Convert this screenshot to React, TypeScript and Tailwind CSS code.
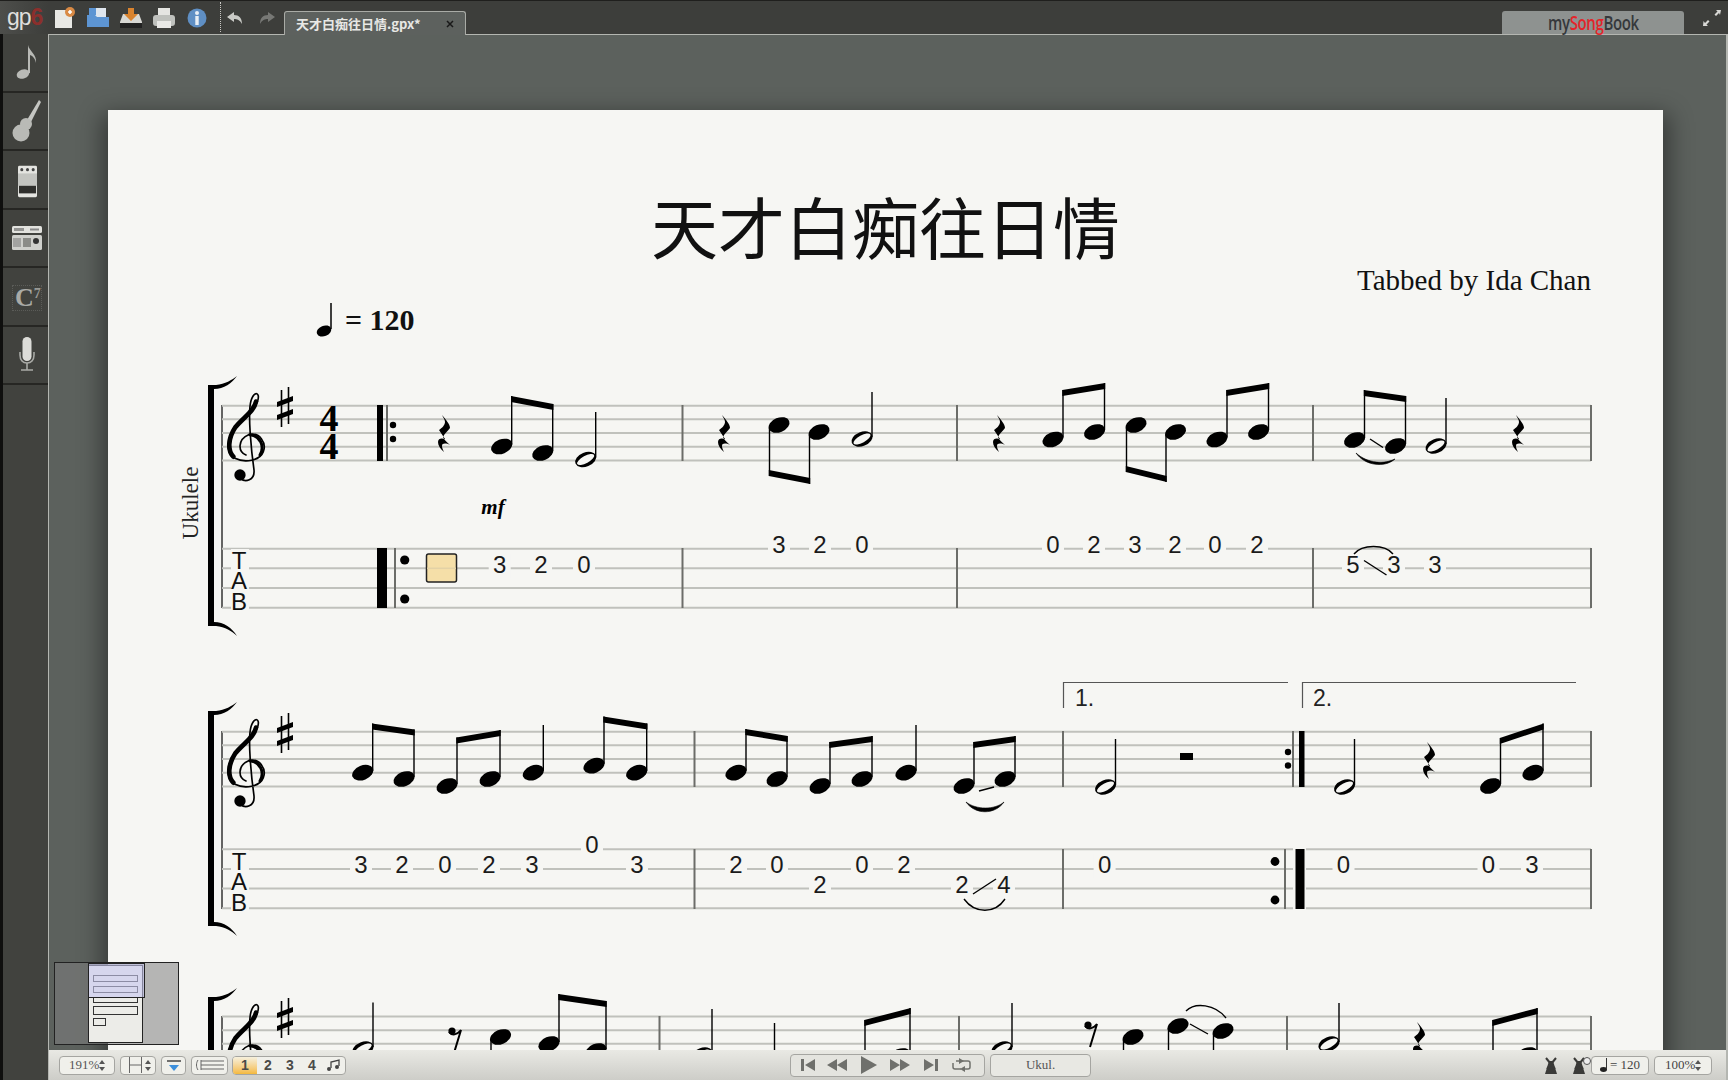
import React from 'react';

const PAPER = '#f6f6f3';
const SANS = '"Liberation Sans", Arial, sans-serif';
const SERIF = '"Liberation Serif", "Times New Roman", serif';

const Head = ({ x, y }: { x: number; y: number }) => (
  <ellipse cx={x} cy={y} rx={11} ry={7.2} transform={`rotate(-22 ${x} ${y})`} fill="#000" />
);

const HalfHead = ({ x, y }: { x: number; y: number }) => (
  <g>
    <ellipse cx={x} cy={y} rx={11} ry={7} transform={`rotate(-22 ${x} ${y})`} fill="#000" />
    <ellipse cx={x} cy={y} rx={9.5} ry={3.6} transform={`rotate(-28 ${x} ${y})`} fill={PAPER} />
  </g>
);

const Stem = ({ x, y1, y2 }: { x: number; y1: number; y2: number }) => (
  <line x1={x} x2={x} y1={y1} y2={y2} stroke="#000" strokeWidth={1.4} />
);

// up stems: note head + stem on the right side
const Up = ({ x, y, top, half }: { x: number; y: number; top: number; half?: boolean }) => (
  <g>
    {half ? <HalfHead x={x} y={y} /> : <Head x={x} y={y} />}
    <Stem x={x + 10} y1={y - 2} y2={top} />
  </g>
);

const Down = ({ x, y, bottom }: { x: number; y: number; bottom: number }) => (
  <g>
    <Head x={x} y={y} />
    <Stem x={x - 9.5} y1={y + 2} y2={bottom} />
  </g>
);

const Beam = ({ x1, y1, x2, y2, below }: { x1: number; y1: number; x2: number; y2: number; below?: boolean }) => {
  const t = below ? -6 : 6;
  return <polygon points={`${x1 - 0.7},${y1} ${x2 + 0.7},${y2} ${x2 + 0.7},${y2 + t} ${x1 - 0.7},${y1 + t}`} fill="#000" />;
};

const Rest = ({ x, y }: { x: number; y: number }) => (
  <path
    transform={`translate(${x} ${y})`}
    fill="#000"
    d="M-2 -18C2 -13 6 -9 6 -5C4 -2 0 1 -1 4C0 7 3 9 6 12C2 10 -2 10 -2 13C-2 15 -1 17 0 19C-4 16 -6 12 -6 9C-6 5 -2 5 1 6L-5 -3C-2 -5 1 -8 1 -11C1 -13 -1 -16 -2 -18Z"
  />
);

const EighthRest = ({ x, y }: { x: number; y: number }) => (
  <g transform={`translate(${x} ${y})`}>
    <circle cx={-3} cy={-7} r={3.6} fill="#000" />
    <path d="M-6 -6C-3 -2 2 -3 6 -8L-1 15" fill="none" stroke="#000" strokeWidth={2} />
  </g>
);

const Clef = ({ y }: { y: number }) => (
  <g transform={`translate(170 ${y}) scale(0.3333)`} fill="none" stroke="#000" strokeLinecap="round">
    <path
      strokeWidth={5}
      d="M228 285C203 275 203 238 236 224C270 215 290 250 280 275C270 302 225 310 195 295C165 275 170 235 195 200C225 165 268 140 265 108C262 95 250 100 243 122C232 160 245 280 252 330C255 362 225 368 212 355"
    />
    <path strokeWidth={14} d="M190 290C172 272 174 235 196 202C220 172 252 155 258 125" />
    <path strokeWidth={9} d="M270 285C285 260 272 228 240 224" />
    <circle cx={210} cy={345} r={17} fill="#000" stroke="none" />
  </g>
);

const Sharp = ({ y }: { y: number }) => (
  <g>
    <line x1={281.5} x2={281.5} y1={y + 3} y2={y + 40} stroke="#000" strokeWidth={1.6} />
    <line x1={288.5} x2={288.5} y1={y} y2={y + 37} stroke="#000" strokeWidth={1.6} />
    <polygon points={`277,${y + 15} 293,${y + 9} 293,${y + 14} 277,${y + 20}`} fill="#000" />
    <polygon points={`277,${y + 28} 293,${y + 22} 293,${y + 27} 277,${y + 33}`} fill="#000" />
  </g>
);

const Bracket = ({ top, bottom }: { top: number; bottom: number }) => (
  <g fill="#000">
    <rect x={208} y={top} width={6} height={bottom - top} />
    <path d={`M208 ${top}H216C225 ${top - 1} 232 ${top - 5} 237 ${top - 9}C232 ${top - 2} 224 ${top + 4} 214 ${top + 4}H208Z`} />
    <path d={`M208 ${bottom}H216C225 ${bottom + 1} 232 ${bottom + 5} 237 ${bottom + 10}C232 ${bottom + 2} 224 ${bottom - 4} 214 ${bottom - 4}H208Z`} />
  </g>
);

// five lines, spaced as in Guitar Pro at this zoom
const Staff = ({ y, x2 = 1591 }: { y: number; x2?: number }) => (
  <g stroke="#c0c1bc" strokeWidth={2}>
    {[0, 1, 2, 3, 4].map((i) => (
      <line key={i} x1={222} x2={x2} y1={y + i * 13.67} y2={y + i * 13.67} />
    ))}
  </g>
);

const TabLines = ({ y }: { y: number }) => (
  <g stroke="#c0c1bc" strokeWidth={2}>
    {[0, 1, 2, 3].map((i) => (
      <line key={i} x1={222} x2={1591} y1={y + i * 19.65} y2={y + i * 19.65} />
    ))}
  </g>
);

const Bar = ({ x, y1, y2 }: { x: number; y1: number; y2: number }) => (
  <line x1={x} x2={x} y1={y1} y2={y2} stroke="#6c6d69" strokeWidth={2} />
);

const Fret = ({ x, y, n }: { x: number; y: number; n: number }) => (
  <g>
    <rect x={x - 11} y={y - 12} width={22} height={24} fill={PAPER} />
    <text x={x} y={y + 7} textAnchor="middle" fontSize={24} fontFamily={SANS} fill="#1a1a1a">
      {n}
    </text>
  </g>
);

const TabClef = ({ y }: { y: number }) => (
  <g fontFamily={SANS} fontSize={24} fill="#111" textAnchor="middle">
    <rect x={231} y={y + 6} width={18} height={60} fill={PAPER} />
    <text x={239} y={y + 26}>T</text>
    <text x={239} y={y + 46}>A</text>
    <text x={239} y={y + 67}>B</text>
  </g>
);

const Score = () => (
  <svg viewBox="108 370 1555 830" width={1555} height={830} className="block">
    {/* system 1 */}
    <Bracket top={385} bottom={626} />
    <line x1={222} x2={222} y1={405} y2={608} stroke="#333" strokeWidth={1.5} />
    <Staff y={405.7} />
    <TabLines y={548.7} />
    <Clef y={360} />
    <Sharp y={387} />
    <g fontFamily={SERIF} fontWeight={700} fontSize={38} textAnchor="middle" fill="#000">
      <text x={329} y={431}>4</text>
      <text x={329} y={459}>4</text>
    </g>
    <text x={0} y={0} transform="translate(198 503) rotate(-90)" textAnchor="middle" fontFamily={SERIF} fontSize={23} fill="#222">
      Ukulele
    </text>
    <TabClef y={543} />
    <rect x={377} y={405} width={6} height={56} fill="#000" />
    <line x1={387} x2={387} y1={405} y2={461} stroke="#6c6d69" strokeWidth={2} />
    <circle cx={393} cy={425} r={3.2} />
    <circle cx={393} cy={439} r={3.2} />
    <rect x={377} y={548} width={10} height={60} fill="#000" />
    <line x1={395} x2={395} y1={548} y2={608} stroke="#6c6d69" strokeWidth={2} />
    <circle cx={404.7} cy={560} r={4.6} />
    <circle cx={404.7} cy={599} r={4.6} />
    {[682.5, 957, 1313, 1591].map((x) => (
      <g key={x}>
        <Bar x={x} y1={405} y2={461} />
        <Bar x={x} y1={548} y2={608} />
      </g>
    ))}

    <Rest x={444} y={433} />
    <Up x={501.7} y={446.5} top={396} />
    <Up x={542.7} y={453} top={404} />
    <Beam x1={511.7} y1={396} x2={552.7} y2={404} />
    <Up x={585.7} y={459.5} top={412} half />
    <text x={493} y={514} textAnchor="middle" fontFamily={SERIF} fontStyle="italic" fontWeight={700} fontSize={21}>
      mf
    </text>
    <rect x={426.5} y={554} width={30} height={28} rx={2} fill="#f5dfa8" stroke="#222" strokeWidth={1.5} />
    <line x1={427} x2={456} y1={568.3} y2={568.3} stroke="#e3d2a6" strokeWidth={1.5} />
    <Fret x={499.7} y={566} n={3} />
    <Fret x={541} y={566} n={2} />
    <Fret x={584} y={566} n={0} />

    <Rest x={724} y={433} />
    <Down x={779} y={425} bottom={476} />
    <Down x={819} y={432} bottom={484} />
    <Beam x1={769.5} y1={476} x2={809.5} y2={484} below />
    <Up x={862} y={439} top={392} half />
    <Fret x={779} y={546} n={3} />
    <Fret x={820} y={546} n={2} />
    <Fret x={862} y={546} n={0} />

    <Rest x={999} y={433} />
    <Up x={1053} y={439.5} top={390} />
    <Up x={1094.5} y={432} top={383} />
    <Beam x1={1063} y1={390} x2={1104.5} y2={383} />
    <Down x={1136} y={425} bottom={472} />
    <Down x={1175.5} y={432} bottom={482} />
    <Beam x1={1126.5} y1={472} x2={1166} y2={482} below />
    <Up x={1217} y={439.5} top={390} />
    <Up x={1258.5} y={432} top={383} />
    <Beam x1={1227} y1={390} x2={1268.5} y2={383} />
    {[1053, 1094, 1135, 1175, 1215, 1257].map((x, i) => (
      <Fret key={x} x={x} y={546} n={[0, 2, 3, 2, 0, 2][i]} />
    ))}

    <Up x={1354.5} y={440} top={390} />
    <Up x={1395.5} y={446} top={396} />
    <Beam x1={1364.5} y1={390} x2={1405.5} y2={396} />
    <line x1={1370} y1={439} x2={1383} y2={447.5} stroke="#000" strokeWidth={1.4} />
    <path d="M1356 453C1365 466 1385 468 1395 459C1385 464 1368 464 1356 453Z" stroke="#000" strokeWidth={0.6} />
    <Up x={1436} y={446} top={398} half />
    <Rest x={1518} y={433} />
    <Fret x={1353} y={566} n={5} />
    <Fret x={1394} y={566} n={3} />
    <Fret x={1435} y={566} n={3} />
    <line x1={1364} y1={560.5} x2={1386.5} y2={575} stroke="#000" strokeWidth={1.4} />
    <path d="M1354 554C1362 544 1385 544 1393 554" fill="none" stroke="#000" strokeWidth={1.4} />

    {/* system 2 */}
    <Bracket top={711} bottom={926} />
    <line x1={222} x2={222} y1={731} y2={909} stroke="#333" strokeWidth={1.5} />
    <Staff y={731.7} />
    <TabLines y={849.3} />
    <Clef y={686} />
    <Sharp y={713} />
    <TabClef y={844} />
    {[694.5, 1063, 1591].map((x) => (
      <g key={x}>
        <Bar x={x} y1={731} y2={787} />
        <Bar x={x} y1={849} y2={909} />
      </g>
    ))}

    <Up x={362.7} y={772.7} top={723.5} />
    <Up x={404} y={779} top={729.5} />
    <Beam x1={372.7} y1={723.5} x2={414} y2={729.5} />
    <Up x={447} y={786} top={737.5} />
    <Up x={490} y={779} top={730} />
    <Beam x1={457} y1={737.5} x2={500} y2={730} />
    <Up x={533.3} y={772.7} top={725} />
    <Up x={594} y={765.7} top={716.5} />
    <Up x={636.7} y={772.7} top={723.5} />
    <Beam x1={604} y1={716.5} x2={646.7} y2={723.5} />
    {[361, 402, 445, 489, 532, 637].map((x, i) => (
      <Fret key={x} x={x} y={866} n={[3, 2, 0, 2, 3, 3][i]} />
    ))}
    <Fret x={592} y={846} n={0} />

    <Up x={736} y={772.7} top={729} />
    <Up x={777} y={779} top={736} />
    <Beam x1={746} y1={729} x2={787} y2={736} />
    <Up x={820} y={786} top={742} />
    <Up x={862} y={779} top={736} />
    <Beam x1={830} y1={742} x2={872} y2={736} />
    <Up x={906} y={772.7} top={725} />
    <Up x={964} y={786} top={742} />
    <Up x={1005} y={779} top={736} />
    <Beam x1={974} y1={742} x2={1015} y2={736} />
    <line x1={979} y1={791} x2={994} y2={787} stroke="#000" strokeWidth={1.4} />
    <path d="M966 802C975 815 995 815 1004 802C995 810 976 810 966 802Z" stroke="#000" strokeWidth={0.6} />
    <Fret x={736} y={866} n={2} />
    <Fret x={777} y={866} n={0} />
    <Fret x={820} y={886} n={2} />
    <Fret x={862} y={866} n={0} />
    <Fret x={904} y={866} n={2} />
    <Fret x={962} y={886} n={2} />
    <Fret x={1004} y={886} n={4} />
    <line x1={973} y1={894} x2={996} y2={879} stroke="#000" strokeWidth={1.4} />
    <path d="M964 899C975 914 995 914 1005 899" fill="none" stroke="#000" strokeWidth={1.4} />

    <g stroke="#555" strokeWidth={1.2} fill="none">
      <path d="M1063.5 708V682.5H1288" />
      <path d="M1302.5 708V682.5H1576" />
    </g>
    <text x={1075} y={706} fontFamily={SANS} fontSize={23} fill="#222">1.</text>
    <text x={1313} y={706} fontFamily={SANS} fontSize={23} fill="#222">2.</text>
    <Up x={1105.5} y={787} top={739} half />
    <rect x={1180} y={753} width={13} height={7} fill="#000" />
    <circle cx={1288} cy={752} r={3.2} />
    <circle cx={1288} cy={765.5} r={3.2} />
    <Bar x={1293} y1={731} y2={787} />
    <rect x={1299} y={731} width={5.5} height={56} fill="#000" />
    <Up x={1344.5} y={787} top={739} half />
    <Rest x={1429} y={760} />
    <Up x={1490.5} y={786} top={738} />
    <Up x={1533} y={772.7} top={723.5} />
    <Beam x1={1500.5} y1={738} x2={1543} y2={723.5} />
    <Fret x={1104.6} y={866} n={0} />
    <circle cx={1275} cy={861.5} r={4.4} />
    <circle cx={1275} cy={900} r={4.4} />
    <Bar x={1285} y1={849} y2={909} />
    <rect x={1293} y={848} width={13} height={62} fill={PAPER} />
    <rect x={1295.5} y={849} width={9} height={60} fill="#000" />
    <Fret x={1343.5} y={866} n={0} />
    <Fret x={1488.5} y={866} n={0} />
    <Fret x={1532} y={866} n={3} />

    {/* system 3, runs under the status bar */}
    <Bracket top={997} bottom={1200} />
    <line x1={222} x2={222} y1={1016} y2={1100} stroke="#333" strokeWidth={1.5} />
    <Staff y={1016.5} />
    <Clef y={971} />
    <Sharp y={998} />
    {[659.5, 959, 1287, 1591].map((x) => (
      <Bar key={x} x={x} y1={1016} y2={1072} />
    ))}
    <Up x={363} y={1049} top={1002.5} half />
    <EighthRest x={455} y={1038} />
    <Down x={500.5} y={1037} bottom={1075} />
    <Up x={549} y={1044} top={994} />
    <Up x={596} y={1051} top={1001} />
    <Beam x1={559} y1={994} x2={606} y2={1001} />
    <Up x={702} y={1055} top={1009} half />
    <Up x={764.5} y={1066} top={1023} />
    <Up x={855} y={1060} top={1020} />
    <Up x={900} y={1056} top={1008} />
    <Beam x1={865} y1={1020} x2={910} y2={1008} />
    <Up x={1002} y={1049} top={1003} half />
    <EighthRest x={1091} y={1032} />
    <Down x={1133} y={1037} bottom={1075} />
    <Down x={1178} y={1026} bottom={1075} />
    <Down x={1223} y={1031} bottom={1075} />
    <line x1={1190} y1={1024} x2={1208} y2={1034} stroke="#000" strokeWidth={1.4} />
    <path d="M1186 1011C1195 1002 1215 1004 1226 1018" fill="none" stroke="#000" strokeWidth={1.4} />
    <Up x={1329} y={1044} top={1003} half />
    <Rest x={1419} y={1040} />
    <Up x={1483} y={1060} top={1020} />
    <Up x={1527} y={1055} top={1008} />
    <Beam x1={1493} y1={1020} x2={1537} y2={1008} />
  </svg>
);

const TopIcon = ({ children }: { children: React.ReactNode }) => (
  <div className="flex h-full w-[33px] items-center justify-center">{children}</div>
);

const TopBar = () => (
  <header className="relative z-10 flex h-[34px] shrink-0 items-end border-t border-[#1f1f1d] bg-[#3d3e3b]">
    <div className="flex h-[33px] w-[48px] items-center bg-gradient-to-r from-[#4d4e4b] to-[#3d3e3b] pl-[7px]">
      <span className="text-[23px] leading-none tracking-[-1px] text-[#dfdfdd]" style={{ fontFamily: SANS }}>
        gp<span className="font-bold text-[#8c2f2c]">6</span>
      </span>
    </div>
    <div className="flex h-[33px]">
      <TopIcon>
        <svg width="22" height="22" viewBox="0 0 22 22">
          <rect x="1" y="3" width="17" height="18" fill="#e8e8e4" />
          <circle cx="16" cy="5" r="5" fill="#d98a45" />
          <path d="M14 5h4M16 3v4" stroke="#fff" strokeWidth="1.6" />
        </svg>
      </TopIcon>
      <TopIcon>
        <svg width="24" height="22" viewBox="0 0 24 22">
          <rect x="3" y="1" width="17" height="12" fill="#dfe6ee" />
          <path d="M3 1h7v7H3Z" fill="#5d95d3" />
          <path d="M1 8h8l2 2h12v10H1Z" fill="#5d95d3" />
        </svg>
      </TopIcon>
      <TopIcon>
        <svg width="24" height="22" viewBox="0 0 24 22">
          <path d="M4 7h16l3 8v6H1v-6Z" fill="#d8d8d4" />
          <rect x="1" y="16" width="22" height="5" fill="#222" />
          <path d="M9 1h6v6h4l-7 7-7-7h4Z" fill="#d9832e" />
        </svg>
      </TopIcon>
      <TopIcon>
        <svg width="24" height="22" viewBox="0 0 24 22">
          <rect x="6" y="1" width="12" height="8" fill="#e5e5e2" />
          <rect x="1" y="8" width="22" height="11" rx="3" fill="#bfc1bd" />
          <rect x="5" y="14" width="14" height="7" fill="#e9e9e6" />
        </svg>
      </TopIcon>
      <TopIcon>
        <svg width="20" height="20" viewBox="0 0 20 20">
          <circle cx="10" cy="10" r="9.5" fill="#5f8fc4" />
          <circle cx="10" cy="5" r="2" fill="#e8eef5" />
          <rect x="8.3" y="8" width="3.4" height="9" fill="#e8eef5" />
        </svg>
      </TopIcon>
    </div>
    <div className="mb-[2px] ml-[7px] h-[30px] w-px border-l border-dotted border-[#c9c9c5]" />
    <div className="flex h-[33px] w-[28px] items-center justify-center">
      <svg width="16" height="14" viewBox="0 0 16 14">
        <path d="M7 1 0 6l7 5V8c3 0 6 1 8 5 0-6-3-9-8-9Z" fill="#c9cac6" />
      </svg>
    </div>
    <div className="ml-[4px] flex h-[33px] w-[28px] items-center justify-center">
      <svg width="16" height="14" viewBox="0 0 16 14">
        <path d="M9 1l7 5-7 5V8c-3 0-6 1-8 5 0-6 3-9 8-9Z" fill="#777875" />
      </svg>
    </div>
    <div className="relative ml-[3px] -mb-px flex h-[24px] w-[182px] items-center rounded-t-[3px] border-x border-t border-[#a9aba6] bg-[#5d615e] pl-[11px]">
      <span className="text-[13px] font-bold text-[#e8e8e5]" style={{ fontFamily: '"Noto Sans CJK TC", "Liberation Sans", sans-serif' }}>
        天才白痴往日情.gpx*
      </span>
      <svg className="absolute right-[11px] top-[8px]" width="8" height="8" viewBox="0 0 8 8">
        <path d="M1 1l6 6M7 1 1 7" stroke="#191919" strokeWidth="1.5" />
      </svg>
    </div>
    <div className="ml-auto mr-[44px] flex h-[23px] w-[182px] items-center justify-center rounded-t-[3px] bg-[#8e9290]">
      <span className="scale-x-[0.75] text-[20px] font-semibold leading-none tracking-[-0.5px] text-[#35383b]" style={{ fontFamily: '"Open Sans", sans-serif' }}>
        my<span className="text-[#e5242a]">Song</span>Book
      </span>
    </div>
    <svg className="absolute right-[5px] top-[7px]" width="22" height="20" viewBox="0 0 22 20">
      <path d="M20 2l-5 0 1.5 1.5-3 3 1.5 1.5 3-3L19 7Z M2 18l5 0-1.5-1.5 3-3L7 12l-3 3L2.5 13Z" fill="#d8d8d5" />
    </svg>
  </header>
);

const RailCell = ({ children }: { children: React.ReactNode }) => (
  <div className="flex h-[58.5px] items-center justify-center border-b-2 border-[#262623] pl-[3px]">{children}</div>
);

const Rail = () => (
  <aside className="w-[48px] shrink-0 border-l-[3px] border-[#0f0f0e] bg-[#41423e]">
    <RailCell>
      <svg width="26" height="40" viewBox="0 0 26 40">
        <ellipse cx="9" cy="32" rx="6.5" ry="4.5" fill="#b9bab6" transform="rotate(-20 9 32)" />
        <path d="M14 31V3c1 6 9 9 8 18-.5-4-3-7-6-8v18Z" fill="#b9bab6" />
      </svg>
    </RailCell>
    <RailCell>
      <svg width="30" height="44" viewBox="0 0 30 44">
        <path d="M27 1l2 2-10 20-4-2Z" fill="#c5c6c2" />
        <circle cx="9" cy="34" r="8.5" fill="#b9bab6" />
        <circle cx="14" cy="25" r="6" fill="#b9bab6" />
      </svg>
    </RailCell>
    <RailCell>
      <svg className="mt-[4px]" width="19" height="33" viewBox="0 0 20 33">
        <rect x="0" y="0" width="20" height="33" rx="1.5" fill="#e4e4e0" />
        <rect x="0" y="8" width="20" height="13" fill="#c3c4c0" />
        <rect x="1" y="21" width="18" height="8" fill="#2f2f2c" />
        <circle cx="4" cy="4" r="1.6" fill="#444" />
        <circle cx="10" cy="4" r="1.6" fill="#444" />
        <circle cx="16" cy="4" r="1.6" fill="#444" />
      </svg>
    </RailCell>
    <RailCell>
      <svg width="30" height="24" viewBox="0 0 30 24">
        <rect x="0" y="0" width="30" height="7" rx="1.5" fill="#e2e2de" />
        <path d="M3 2v3M5 2v3M7 2v3M9 2v3M11 2v3" stroke="#444" />
        <rect x="18" y="2.5" width="9" height="2" fill="#888" />
        <rect x="0" y="9" width="30" height="15" rx="1.5" fill="#cfd0cc" />
        <rect x="11" y="12" width="8" height="9" fill="#8b8c88" />
        <circle cx="24" cy="15" r="3" fill="#333" />
        <path d="M2 12v9M4 12v9M6 12v9M8 12v9" stroke="#777" />
      </svg>
    </RailCell>
    <RailCell>
      <div className="relative mt-[4px] flex h-[26px] w-[30px] items-center border border-dotted border-[#5b5c58] pl-[2px]" style={{ fontFamily: SERIF }}>
        <span className="text-[26px] font-bold leading-none text-[#a9aaa6]">C</span>
        <span className="mb-[8px] text-[14px] font-bold leading-none text-[#989995]">7</span>
      </div>
    </RailCell>
    <RailCell>
      <svg width="18" height="36" viewBox="0 0 18 36">
        <rect x="4.5" y="0" width="9" height="24" rx="4.5" fill="#dcdcd8" />
        <path d="M2 15v3c0 5 3 8 7 8s7-3 7-8v-3" fill="none" stroke="#a9aaa6" strokeWidth="1.6" />
        <path d="M9 26v7M3 33h12" stroke="#a9aaa6" strokeWidth="1.6" />
      </svg>
    </RailCell>
  </aside>
);

const Pill = ({ className, children }: { className: string; children: React.ReactNode }) => (
  <div className={`flex h-[19px] items-center rounded-[4px] border border-[#a5a5a1] bg-[#f0f0eb] ${className}`}>{children}</div>
);

const Spin = () => (
  <svg width="6" height="11" viewBox="0 0 6 11" className="shrink-0">
    <path d="M3 0l3 4H0ZM3 11 0 7h6Z" fill="#555" />
  </svg>
);

const Metronome = () => (
  <svg width="14" height="17" viewBox="0 0 14 17">
    <path d="M5 4h4l4 13H1Z" fill="#3a3a38" />
    <path d="M2 1l9 11M12 1 3 12" stroke="#3a3a38" strokeWidth="2" />
  </svg>
);

const transportFill = '#6f706c';

const StatusBar = () => (
  <footer className="z-10 flex h-[30px] shrink-0 items-center bg-gradient-to-b from-[#e9e9e4] to-[#cdcdc8] pl-[10px]" style={{ fontFamily: SERIF }}>
    <Pill className="w-[56px] justify-between px-[9px] text-[13px] text-[#555]">
      <span>191%</span>
      <Spin />
    </Pill>
    <Pill className="ml-[5px] w-[36px] justify-between pl-[8px] pr-[4px]">
      <svg width="13" height="16" viewBox="0 0 13 16">
        <path d="M.5 0v16M12.5 0v16M.5 8h12" stroke="#666" fill="none" />
      </svg>
      <Spin />
    </Pill>
    <Pill className="ml-[5px] w-[25px] justify-center">
      <svg width="16" height="12" viewBox="0 0 16 12">
        <path d="M1 2h14" stroke="#444" strokeWidth="1.5" />
        <path d="M3 6h10l-5 6Z" fill="#3c8fdc" />
      </svg>
    </Pill>
    <Pill className="ml-[5px] w-[37px] justify-center">
      <svg width="30" height="12" viewBox="0 0 30 12">
        <path d="M3 1C1 4 1 8 3 11M6 2h23M6 6h23M6 10h23M6 1v10" stroke="#666" fill="none" />
      </svg>
    </Pill>
    <Pill className="ml-[4px] w-[114px] overflow-hidden font-bold text-[#4a4a48]">
      <span className="flex h-full w-[24px] items-center justify-center bg-gradient-to-b from-[#f6f0dc] to-[#f4b93a] text-[14px]" style={{ fontFamily: SANS }}>1</span>
      <span className="w-[22px] text-center text-[14px]" style={{ fontFamily: SANS }}>2</span>
      <span className="w-[22px] text-center text-[14px]" style={{ fontFamily: SANS }}>3</span>
      <span className="w-[22px] text-center text-[14px]" style={{ fontFamily: SANS }}>4</span>
      <svg className="ml-[3px]" width="14" height="13" viewBox="0 0 14 13">
        <path d="M5 9V3l8-2v6" fill="none" stroke="#444" strokeWidth="1.3" />
        <circle cx="3" cy="10" r="2" fill="#444" />
        <circle cx="11" cy="8" r="2" fill="#444" />
      </svg>
    </Pill>
    <div className="ml-[444px] flex h-[23px] w-[195px] items-center rounded-[4px] border border-[#a5a5a1] bg-[#e4e4df] pl-[10px]">
      <svg width="172" height="18" viewBox="0 -1 172 18" fill={transportFill}>
        <path d="M0 2h3v12H0ZM14 2v12L4 8Z" />
        <path d="M36 2v12l-10-6ZM46 2v12l-10-6Z" />
        <path d="M60 -1l16 9-16 9Z" />
        <path d="M89 2v12l10-6ZM99 2v12l10-6Z" />
        <path d="M123 2v12l10-6ZM134 2h3v12h-3Z" />
        <path d="M155 4h12a2 2 0 0 1 2 2v4a2 2 0 0 1-2 2h-4M160 12h-6a2 2 0 0 1-2-2V6" fill="none" stroke={transportFill} strokeWidth="1.5" />
        <path d="M158 1l5 3-5 3ZM164 9v6l-5-3Z" />
      </svg>
    </div>
    <div className="ml-[5px] flex h-[23px] w-[101px] items-center justify-center rounded-[4px] border border-[#a5a5a1] bg-[#e8e8e3] text-[13px] text-[#555]">Ukul.</div>
    <div className="ml-[453px] flex w-[45px] justify-between">
      <Metronome />
      <div className="relative mr-[3px]">
        <Metronome />
        <div className="absolute -right-[5px] top-0 h-[8px] w-[8px] rounded-full border border-[#555] bg-[#eee]" />
      </div>
    </div>
    <Pill className="ml-[2px] w-[58px] justify-between px-[8px] text-[13px] text-[#444]">
      <svg width="8" height="14" viewBox="0 0 8 14">
        <ellipse cx="3.5" cy="11.5" rx="3.5" ry="2.4" fill="#222" />
        <path d="M6.5 11V0" stroke="#333" />
      </svg>
      <span>= 120</span>
    </Pill>
    <Pill className="ml-[5px] w-[58px] justify-between px-[10px] text-[13px] text-[#444]">
      <span>100%</span>
      <Spin />
    </Pill>
  </footer>
);

const Thumbnail = () => (
  <div className="absolute bottom-[35px] left-[5px] h-[83px] w-[125px] border border-[#222] bg-[#808080]/55">
    <div className="ml-[33px] mt-[2px] h-[78px] w-[55px] border border-[#222] bg-[#ecece8] pl-[4px] pt-[9px]">
      <div className="h-[7px] w-[45px] border border-[#333]" />
      <div className="mt-[4px] h-[7px] w-[45px] border border-[#333]" />
      <div className="mt-[4px] h-[6px] w-[45px] border border-[#333]" />
      <div className="mt-[3px] h-[9px] w-[45px] border border-[#333]" />
      <div className="mt-[3px] h-[8px] w-[13px] border border-[#333]" />
    </div>
    <div className="absolute left-[33px] top-0 h-[35px] w-[57px] border border-[#222] bg-[#c8c8f0]/60" />
  </div>
);

export default function App() {
  return (
    <div className="flex h-[1080px] w-[1728px] flex-col overflow-hidden bg-[#3d3e3b]">
      <TopBar />
      <div className="flex min-h-0 flex-1">
        <Rail />
        <main className="relative flex min-w-0 flex-1 flex-col border-l border-t border-r-2 border-[#b4b6b1]">
          <div className="min-h-0 flex-1 overflow-hidden bg-[#5c615d] pl-[59px] pt-[75px]">
            <div className="relative h-[1100px] w-[1555px] bg-[#f6f6f3] shadow-[0_10px_22px_6px_rgba(0,0,0,0.42)]">
              <div className="h-[260px]">
                <h1 className="pt-[71px] text-center text-[67px] font-normal leading-[88px] text-[#111]" style={{ fontFamily: '"Noto Sans CJK TC", "Noto Sans CJK SC", sans-serif' }}>
                  天才白痴往日情
                </h1>
                <p className="-mt-[6px] pr-[72px] text-right text-[29px] leading-[34px] text-[#111]" style={{ fontFamily: SERIF }}>
                  Tabbed by Ida Chan
                </p>
                <div className="mt-[5px] flex items-center pl-[208px]" style={{ fontFamily: SERIF }}>
                  <svg width="18" height="36" viewBox="0 0 18 36">
                    <ellipse cx="8" cy="29" rx="7.5" ry="5.2" transform="rotate(-22 8 29)" />
                    <path d="M15 27V1" stroke="#000" strokeWidth="1.5" />
                  </svg>
                  <span className="ml-[11px] text-[30px] font-bold leading-none text-[#111]">= 120</span>
                </div>
              </div>
              <Score />
            </div>
          </div>
          <StatusBar />
          <Thumbnail />
        </main>
      </div>
    </div>
  );
}
